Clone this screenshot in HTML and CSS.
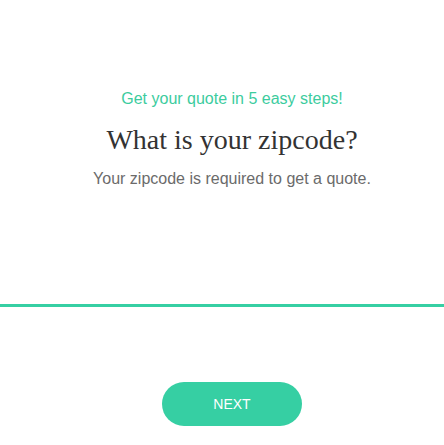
FILE: index.html
```html
<!DOCTYPE html>
<html>
<head>
<meta charset="utf-8">
<link rel="stylesheet" href="styles.css">
</head>
<body>
<div class="page">
  <header class="intro">
    <p class="steps">Get your quote in 5 easy steps!</p>
    <h1 class="title">What is your zipcode?</h1>
    <p class="sub">Your zipcode is required to get a quote.</p>
  </header>
  <div class="field"></div>
  <div class="actions">
    <button class="next">NEXT</button>
  </div>
</div>
</body>
</html>
```
FILE: styles.css
```css
html, body {
  margin: 0;
  padding: 0;
  background: #ffffff;
}
.page {
  display: flex;
  flex-direction: column;
  font-family: "Liberation Sans", Arial, sans-serif;
}
.intro {
  display: flex;
  flex-direction: column;
  align-items: center;
  padding: 89px 0 0 20px;
}
.steps {
  margin: 0;
  font-size: 16px;
  line-height: 20px;
  color: #3ccc9e;
}
.title {
  margin: 15px 0 0;
  font-family: "Liberation Serif", Georgia, serif;
  font-weight: normal;
  font-size: 28px;
  line-height: 32px;
  color: #333333;
}
.sub {
  margin: 13px 0 0;
  font-size: 16px;
  line-height: 20px;
  color: #6b6b6b;
}
.field {
  margin-top: 115px;
  height: 3px;
  background: #36cfa3;
}
.actions {
  display: flex;
  justify-content: center;
  padding: 75px 0 0 20px;
}
.next {
  width: 140px;
  height: 44px;
  border: none;
  border-radius: 22px;
  background: #36cfa3;
  color: #ffffff;
  font-family: "Liberation Sans", Arial, sans-serif;
  font-size: 14px;
  padding: 0;
}
```
